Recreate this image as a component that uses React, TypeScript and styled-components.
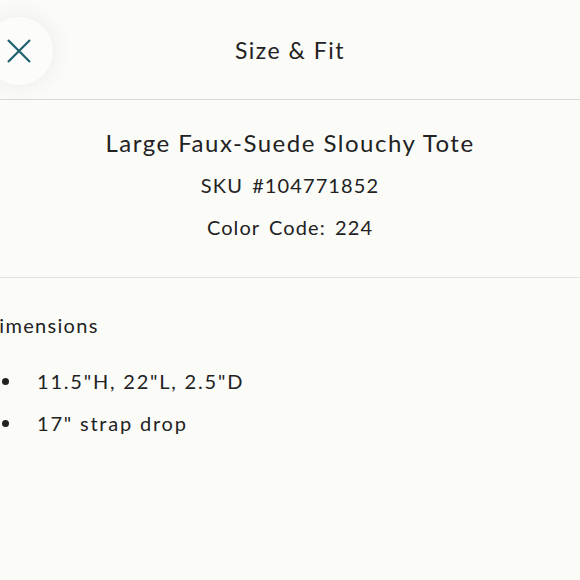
import React from 'react';
import styled, { createGlobalStyle } from 'styled-components';

const GlobalStyle = createGlobalStyle`
  html, body {
    margin: 0;
    padding: 0;
    background: #fbfbf8;
    overflow: hidden;
  }
  body {
    font-family: Lato, "Noto Sans", sans-serif;
    color: #222222;
  }
`;

const Page = styled.div`
  width: 580px;
  height: 580px;
  display: flex;
  flex-direction: column;
  background: #fbfbf8;
`;

const Header = styled.header`
  position: relative;
  height: 99px;
  display: flex;
  align-items: center;
  justify-content: center;
  border-bottom: 1.5px solid #d9d9d6;
`;

const CloseButton = styled.button`
  position: absolute;
  left: -15px;
  top: 17px;
  width: 68px;
  height: 68px;
  border-radius: 50%;
  border: none;
  background: #fcfcfa;
  box-shadow: 0 0 26px rgba(0, 0, 0, 0.07);
  display: flex;
  align-items: center;
  justify-content: center;
  padding: 0;
  cursor: pointer;
`;

const Title = styled.h1`
  margin: 0;
  font-size: 23px;
  font-weight: 400;
  letter-spacing: 1.5px;
`;

const ProductInfo = styled.section`
  display: flex;
  flex-direction: column;
  align-items: center;
  padding: 28px 0 37px;
  border-bottom: 1px solid #e2e2de;
`;

const ProductName = styled.h2`
  margin: 0 0 15px;
  font-size: 24px;
  font-weight: 400;
  letter-spacing: 1.5px;
`;

const InfoLine = styled.p<{ $gap?: number }>`
  margin: 0 0 ${p => p.$gap ?? 0}px;
  font-size: 20px;
  letter-spacing: 1.1px;
  word-spacing: 3px;
  line-height: 26px;
`;

const Details = styled.section`
  margin-left: -17px;
  padding-top: 35px;
`;

const SectionHeading = styled.h3`
  margin: 0 0 31px;
  font-size: 20px;
  font-weight: 400;
  letter-spacing: 1.3px;
`;

const List = styled.ul`
  list-style: none;
  margin: 0;
  padding: 0 0 0 19px;
  display: flex;
  flex-direction: column;
  gap: 16px;
`;

const Item = styled.li`
  display: flex;
  align-items: center;
  gap: 28px;
  font-size: 20px;
  letter-spacing: 1.8px;
  line-height: 26px;
`;

const Dot = styled.span`
  width: 7px;
  height: 7px;
  border-radius: 50%;
  background: #222222;
  flex-shrink: 0;
`;

export default function App() {
  return (
    <Page>
      <GlobalStyle />
      <Header>
        <CloseButton aria-label="Close">
          <svg width="26" height="26" viewBox="0 0 26 26">
            <path d="M2 2 L24 24 M24 2 L2 24" stroke="#1f6070" strokeWidth="2.2" fill="none" />
          </svg>
        </CloseButton>
        <Title>Size &amp; Fit</Title>
      </Header>
      <ProductInfo>
        <ProductName>Large Faux-Suede Slouchy Tote</ProductName>
        <InfoLine $gap={16}>SKU #104771852</InfoLine>
        <InfoLine>Color Code: 224</InfoLine>
      </ProductInfo>
      <Details>
        <SectionHeading>Dimensions</SectionHeading>
        <List>
          <Item><Dot />11.5"H, 22"L, 2.5"D</Item>
          <Item><Dot />17" strap drop</Item>
        </List>
      </Details>
    </Page>
  );
}
